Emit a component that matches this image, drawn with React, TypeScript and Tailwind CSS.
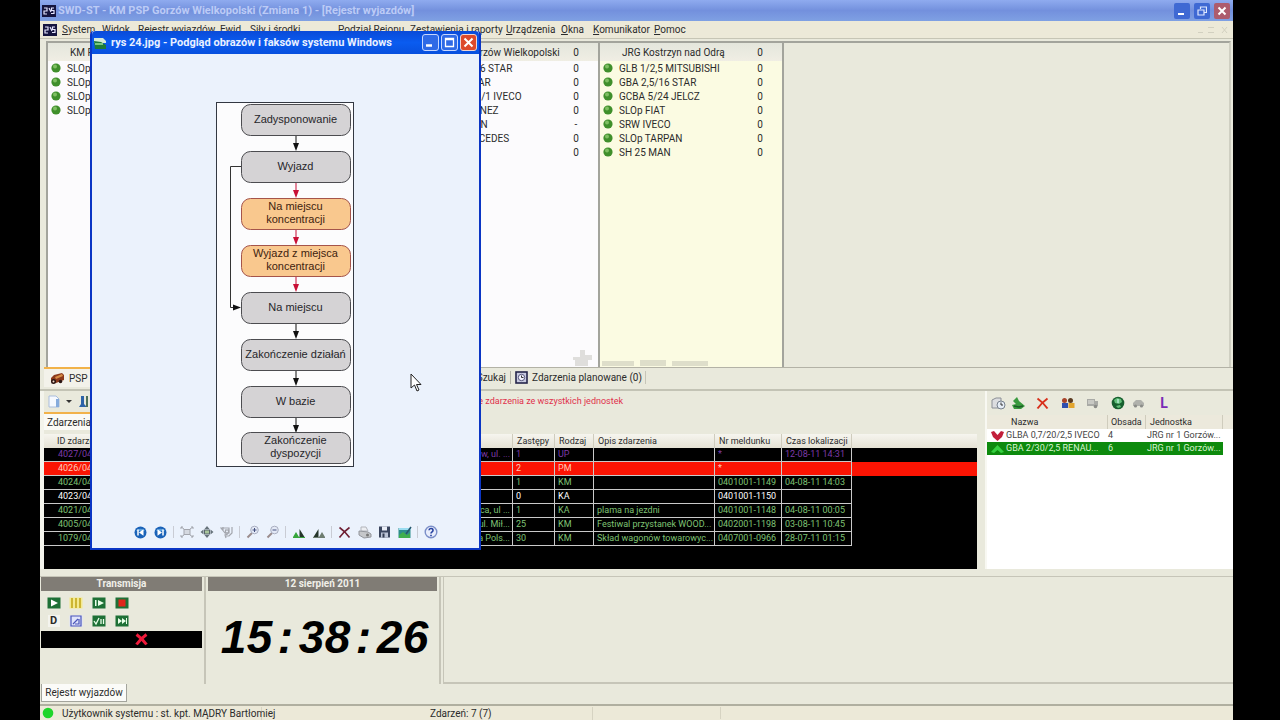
import type { ReactNode } from "react";

type IconButtonProps = { label: string; size?: string; children: ReactNode };

function IconButton({ label, size = "h-5 w-5", children }: IconButtonProps) {
  return (
    <button type="button" aria-label={label} className={"flex shrink-0 items-center justify-center " + size}>
      {children}
    </button>
  );
}

function AppBadge() {
  return (
    <svg width="14" height="12" viewBox="0 0 14 12" className="shrink-0">
      <rect width="14" height="12" fill="#15153f" />
      <path d="M2 3h3v3H2v3h3M7 3l2 4M12 3H9.500v2.500h2.500v3H9" fill="none" stroke="#e6e6ff" strokeWidth="1.200" />
    </svg>
  );
}

function StatusDot() {
  return (
    <svg width="10" height="10" viewBox="0 0 10 10" className="shrink-0">
      <circle cx="5" cy="5" r="4.600" fill="#3f8f2b" />
      <circle cx="4" cy="3.500" r="2" fill="#7fbf62" />
    </svg>
  );
}

type Unit = { name: string; count: string };

function UnitColumn({ title, total, units, tint }: { title: string; total: string; units: Unit[]; tint: string }) {
  return (
    <section className={"flex w-[184px] shrink-0 flex-col border-r-2 border-[#a3a49c] " + tint}>
      <header className="flex h-[18px] items-center bg-linear-to-b from-[#e4e6dc] to-[#f0eee4] pl-[22px] pr-4">
        <h2 className="flex-1 whitespace-nowrap">{title}</h2>
        <span className="w-3 text-center">{total}</span>
      </header>
      <ul>
        {units.map((u) => (
          <li key={u.name} className="flex h-[14px] items-center pl-[3px] pr-4">
            <StatusDot />
            <span className="ml-[6px] flex-1 whitespace-nowrap">{u.name}</span>
            <span className="w-3 text-center">{u.count}</span>
          </li>
        ))}
      </ul>
    </section>
  );
}

const kmUnits: Unit[] = [
  { name: "SLOp POLONEZ", count: "0" },
  { name: "SLOp FIAT", count: "0" },
  { name: "SLOp FORD", count: "0" },
  { name: "SLOp OPEL", count: "0" },
];
const gorzowUnits: Unit[] = [
  { name: "GBA 2,5/16 STAR", count: "0" },
  { name: "GLM 8 STAR", count: "0" },
  { name: "GBAM 2/8/1 IVECO", count: "0" },
  { name: "SD MARTINEZ", count: "0" },
  { name: "SHD 2 MAN", count: "-" },
  { name: "SLRt MERCEDES", count: "0" },
  { name: "PA", count: "0" },
];
const kostrzynUnits: Unit[] = [
  { name: "GLB 1/2,5 MITSUBISHI", count: "0" },
  { name: "GBA 2,5/16 STAR", count: "0" },
  { name: "GCBA 5/24 JELCZ", count: "0" },
  { name: "SLOp FIAT", count: "0" },
  { name: "SRW IVECO", count: "0" },
  { name: "SLOp TARPAN", count: "0" },
  { name: "SH 25 MAN", count: "0" },
];

type EventRow = { id: string; place: string; teams: string; kind: string; desc: string; report: string; time: string; tone: string };
const green = "text-[#7fc274]";
const events: EventRow[] = [
  { id: "4027/04", place: "Gorzów, ul. ...", teams: "1", kind: "UP", desc: "", report: "*", time: "12-08-11 14:31", tone: "text-[#7d3aa8]" },
  { id: "4026/04", place: "", teams: "2", kind: "PM", desc: "", report: "*", time: "", tone: "bg-[#fb1403] text-[#ffc9b8]" },
  { id: "4024/04", place: "", teams: "1", kind: "KM", desc: "", report: "0401001-1149", time: "04-08-11 14:03", tone: green },
  { id: "4023/04", place: "", teams: "0", kind: "KA", desc: "", report: "0401001-1150", time: "", tone: "text-white" },
  { id: "4021/04", place: "Witnica, ul  ...", teams: "1", kind: "KA", desc: "plama na jezdni", report: "0401001-1148", time: "04-08-11 00:05", tone: green },
  { id: "4005/04", place: "ul. Mił...", teams: "25", kind: "KM", desc: "Festiwal przystanek WOOD...", report: "0402001-1198", time: "03-08-11 10:45", tone: green },
  { id: "1079/04", place: "Armia Pols...", teams: "30", kind: "KM", desc: "Skład wagonów towarowyc...", report: "0407001-0966", time: "28-07-11 01:15", tone: green },
];

function EventsTable() {
  const cell = "h-[14px] whitespace-nowrap border-b border-r border-[#c9c9c9] p-0 pl-[3px]";
  const head = "h-[14px] whitespace-nowrap border-r border-[#cfccbd] p-0 pl-1 text-left font-normal";
  return (
    <table className="w-full table-fixed border-separate border-spacing-0 text-[9px]">
      <colgroup>
        <col className="w-[75px]" />
        <col className="w-[394px]" />
        <col className="w-[42px]" />
        <col className="w-[39px]" />
        <col className="w-[121px]" />
        <col className="w-[67px]" />
        <col className="w-[70px]" />
        <col />
      </colgroup>
      <thead>
        <tr className="bg-linear-to-b from-[#f6f5ef] to-[#e5e2d4]">
          <th className={head + " pl-[13px]"}>ID zdarzenia</th>
          <th className={head}>Miejsce</th>
          <th className={head}>Zastępy</th>
          <th className={head}>Rodzaj</th>
          <th className={head}>Opis zdarzenia</th>
          <th className={head}>Nr meldunku</th>
          <th className={head}>Czas lokalizacji</th>
          <th className="p-0" />
        </tr>
      </thead>
      <tbody>
        {events.map((e) => (
          <tr key={e.id} className={e.tone}>
            <td className={cell + " pl-[14px]"}>{e.id}</td>
            <td className={cell + " pr-[2px] text-right"}>{e.place}</td>
            <td className={cell}>{e.teams}</td>
            <td className={cell}>{e.kind}</td>
            <td className={cell}>{e.desc}</td>
            <td className={cell}>{e.report}</td>
            <td className={cell}>{e.time}</td>
            <td className="p-0" />
          </tr>
        ))}
      </tbody>
    </table>
  );
}

function TruckIcon() {
  return (
    <svg width="15" height="13" viewBox="0 0 15 13">
      <path d="M1 6l3-3 8-2 2 2v5l-8 3-5-1z" fill="#8c3a1c" />
      <path d="M5 5l7-3 1 2-7 3z" fill="#d98d45" />
      <circle cx="3.500" cy="9.500" r="2.500" fill="#2b1512" />
      <circle cx="3.500" cy="9.500" r="1" fill="#f2d9c8" />
      <circle cx="10.500" cy="9.500" r="1.800" fill="#2b1512" />
    </svg>
  );
}

function ClockIcon() {
  return (
    <svg width="13" height="13" viewBox="0 0 13 13">
      <rect x="1" y="1" width="11" height="11" fill="#c9cbe0" stroke="#25254a" strokeWidth="1.600" />
      <circle cx="6.500" cy="6.500" r="3.200" fill="#f4f4ff" stroke="#55557a" />
      <path d="M6.500 4.500v2h2" fill="none" stroke="#333" />
    </svg>
  );
}

function CrossIcon({ color = "#d8301c", width = 2 }: { color?: string; width?: number }) {
  return (
    <svg width="13" height="13" viewBox="0 0 13 13">
      <path d="M1.500 1.500C5 4 9 8 11.500 11.500M11.500 1.500C8 4 4 8 1.500 11.500" stroke={color} strokeWidth={width} fill="none" />
    </svg>
  );
}

const nodes = [
  { y: 2, lines: ["Zadysponowanie"], hot: false, hotArrow: false },
  { y: 49, lines: ["Wyjazd"], hot: false, hotArrow: true },
  { y: 96, lines: ["Na miejscu", "koncentracji"], hot: true, hotArrow: true },
  { y: 143, lines: ["Wyjazd z miejsca", "koncentracji"], hot: true, hotArrow: true },
  { y: 190, lines: ["Na miejscu"], hot: false, hotArrow: false },
  { y: 237, lines: ["Zakończenie działań"], hot: false, hotArrow: false },
  { y: 284, lines: ["W bazie"], hot: false, hotArrow: false },
  { y: 330, lines: ["Zakończenie", "dyspozycji"], hot: false, hotArrow: false },
];

function FlowDiagram() {
  return (
    <svg width="138" height="365" viewBox="0 0 138 365" fontFamily="'Liberation Sans', Arial, sans-serif" fontSize="11">
      <rect x="0.500" y="0.500" width="137" height="364" fill="#fcfcfd" stroke="#333842" />
      {nodes.map((n, i) => {
        const arrow = n.hotArrow ? "#c80f36" : "#111";
        return (
          <g key={n.y}>
            <rect x="25.500" y={n.y + 0.5} width="109" height="31" rx="9" fill={n.hot ? "#f9c88e" : "#d5d3d5"} stroke={n.hot ? "#a5544a" : "#4c4c50"} />
            {i < nodes.length - 1 && (
              <g>
                <path d={`M80 ${n.y + 32}v8`} stroke={arrow} />
                <path d={`M77 ${n.y + 39}h6l-3 8z`} fill={arrow} />
              </g>
            )}
            {n.lines.map((t, k) => (
              <text key={t} x="79.500" y={n.lines.length === 1 ? n.y + 19 : n.y + 12 + k * 13} textAnchor="middle" fill={n.hot ? "#40230f" : "#26262a"}>
                {t}
              </text>
            ))}
          </g>
        );
      })}
      <path d="M25 64.500H14.500V205.500H18" fill="none" stroke="#333" />
      <path d="M17 202.500v6l8-3z" fill="#111" />
    </svg>
  );
}

function Magnifier({ plus }: { plus: boolean }) {
  return (
    <svg width="14" height="14" viewBox="0 0 14 14">
      <path d="M1.500 12.500L6 8" stroke="#9b8c8c" strokeWidth="2" />
      <circle cx="8.500" cy="5" r="3.800" fill="#e3e9f6" stroke="#a9aec0" />
      <path d={plus ? "M6.500 5h4M8.500 3v4" : "M6.500 5h4"} stroke="#44507e" />
    </svg>
  );
}

function NavDisc({ flip }: { flip: boolean }) {
  return (
    <svg width="13" height="13" viewBox="0 0 13 13" className={flip ? "-scale-x-100" : ""}>
      <circle cx="6.500" cy="6.500" r="6" fill="#1b63b8" />
      <path d="M2 5a5 4 0 019 0z" fill="#5aa1df" />
      <path d="M4 3.500v6" stroke="#fff" strokeWidth="1.500" />
      <path d="M9.500 3.300v6.400L5 6.500z" fill="#fff" />
    </svg>
  );
}

function Hills({ flip, color }: { flip: boolean; color: string }) {
  return (
    <svg width="14" height="12" viewBox="0 0 14 12" className={flip ? "-scale-x-100" : ""}>
      <path d="M1 11l3-5 3 5z" fill={color} />
      <path d="M7.500 3v8h5z" fill="#24352a" />
      <path d="M1 11.500h12" stroke={color} />
    </svg>
  );
}

function Divider() {
  return (
    <span className="flex w-[6px] justify-center">
      <span className="h-3 w-px bg-[#c9ccd4]" />
    </span>
  );
}

function ViewerToolbar() {
  return (
    <div className="flex h-5 items-center">
      <IconButton label="Poprzedni obraz"><NavDisc flip={false} /></IconButton>
      <IconButton label="Następny obraz"><NavDisc flip /></IconButton>
      <Divider />
      <IconButton label="Najlepsze dopasowanie">
        <svg width="14" height="12" viewBox="0 0 14 12" fill="none" stroke="#a3a6ad">
          <rect x="4" y="3.500" width="6" height="5" fill="#d5d9e0" />
          <path d="M1 1l3 2M13 1l-3 2M1 11l3-2M13 11l-3-2M1 3V1h2M11 1h2v2M1 9v2h2M11 11h2V9" />
        </svg>
      </IconButton>
      <IconButton label="Rzeczywisty rozmiar">
        <svg width="14" height="14" viewBox="0 0 14 14" fill="#66727a">
          <rect x="4.500" y="5" width="5" height="4" fill="#a8c59b" stroke="#59646c" />
          <path d="M7 1l2.500 3h-5zM7 13l2.500-3h-5zM.5 7l3-2.500v5zM13.500 7l-3-2.500v5z" />
        </svg>
      </IconButton>
      <IconButton label="Pokaz slajdów">
        <svg width="14" height="13" viewBox="0 0 14 13" fill="none" stroke="#a3a6ad" strokeWidth="1.200">
          <path d="M1 2h8v5H5zM3 1v3M12 1v6l-3 3H6M6 12l-1-3 3-1" />
          <rect x="5.500" y="4" width="3" height="3" />
        </svg>
      </IconButton>
      <Divider />
      <IconButton label="Powiększ"><Magnifier plus /></IconButton>
      <IconButton label="Pomniejsz"><Magnifier plus={false} /></IconButton>
      <Divider />
      <IconButton label="Obróć w prawo"><Hills flip={false} color="#35a53b" /></IconButton>
      <IconButton label="Obróć w lewo"><Hills flip color="#6d7d70" /></IconButton>
      <Divider />
      <IconButton label="Usuń"><CrossIcon color="#6e1f33" width={1.6} /></IconButton>
      <IconButton label="Drukuj">
        <svg width="14" height="13" viewBox="0 0 14 13">
          <path d="M3 1h5l2 4H3z" fill="#eceef2" stroke="#b2b5bb" />
          <path d="M1 5l9 1 3 2v3l-7 1-5-3z" fill="#c5c7ca" stroke="#93969c" />
          <circle cx="9.500" cy="9" r="1.500" fill="#777" />
        </svg>
      </IconButton>
      <IconButton label="Kopiuj do">
        <svg width="13" height="12" viewBox="0 0 13 12">
          <path d="M1 .5h11v11H1z" fill="#3a455e" />
          <path d="M4 .5h5v4H4z" fill="#e9edf6" />
          <path d="M3 6.500h7v5H3z" fill="#bcc4d6" />
          <path d="M4.500 7.500h2v4h-2z" fill="#333c52" />
        </svg>
      </IconButton>
      <IconButton label="Edytuj">
        <svg width="14" height="13" viewBox="0 0 14 13">
          <rect x=".5" y="2" width="12" height="10" fill="#2d8d8c" />
          <path d="M1 9l4-3 4 3 3-2v5H1z" fill="#3fae4d" />
          <path d="M1 3h12" stroke="#9adcf0" strokeWidth="2" />
          <path d="M13 1L8 8" stroke="#27566b" strokeWidth="1.500" />
        </svg>
      </IconButton>
      <Divider />
      <IconButton label="Pomoc">
        <svg width="14" height="14" viewBox="0 0 14 14">
          <circle cx="7" cy="7" r="5.800" fill="#e8edfb" stroke="#7b8fc8" strokeWidth="1.400" />
          <path d="M5 5.300a2 2 0 114 .3c0 1.200-2 1.300-2 2.900M7 9.800v1.400" fill="none" stroke="#2743a0" strokeWidth="1.600" />
        </svg>
      </IconButton>
    </div>
  );
}

function ImageViewer() {
  return (
    <div role="dialog" aria-label="Podgląd obrazów" className="absolute left-[50px] top-[31px] flex h-[519px] w-[391px] flex-col rounded-t-[4px] border-2 border-t-0 border-[#0a35c4] bg-[#ebf2fc]">
      <div className="flex h-[23px] items-center rounded-t-[4px] bg-linear-to-b from-[#0a4ad8] via-[#0a5cf0] to-[#0850de] pl-[2px] pr-[2px]">
        <svg width="13" height="13" viewBox="0 0 13 13">
          <path d="M0 2h9l3 3v2H0z" fill="#d5ead9" />
          <path d="M0 5l7 1 5 3v4H1z" fill="#1d7c39" />
          <path d="M1 8h8" stroke="#9be09c" strokeWidth="1.500" />
        </svg>
        <h1 className="ml-1 flex-1 whitespace-nowrap text-[11px] font-bold text-[#e9f0ff]">
          rys 24.jpg - Podgląd obrazów i faksów systemu Windows
        </h1>
        <div className="flex gap-[2px]">
          <IconButton label="Minimalizuj" size="h-[17px] w-[17px] rounded-[3px] border border-[#c7d7ff] bg-[#2f6ae6]">
            <svg width="11" height="11" viewBox="0 0 11 11"><path d="M1 8.500h6" stroke="#fff" strokeWidth="2.500" /></svg>
          </IconButton>
          <IconButton label="Maksymalizuj" size="h-[17px] w-[17px] rounded-[3px] border border-[#c7d7ff] bg-[#2f6ae6]">
            <svg width="11" height="11" viewBox="0 0 11 11"><path d="M1.500 1.500h8v8h-8zM1 2.500h9" fill="none" stroke="#fff" strokeWidth="1.300" /></svg>
          </IconButton>
          <IconButton label="Zamknij podgląd" size="h-[17px] w-[17px] rounded-[3px] border border-[#f1d5d0] bg-[#dd4a2c]">
            <svg width="11" height="11" viewBox="0 0 11 11"><path d="M1.500 1.500l8 8M9.500 1.500l-8 8" stroke="#fff" strokeWidth="2" /></svg>
          </IconButton>
        </div>
      </div>
      <div className="flex flex-1 justify-center pr-[2px] pt-12">
        <FlowDiagram />
      </div>
      <div className="flex justify-center pb-[6px]">
        <ViewerToolbar />
      </div>
      <svg width="12" height="19" viewBox="0 0 12 19" className="absolute left-[318px] top-[342px]">
        <path d="M1 1v14l3.500-3 2.500 6 2-1-2.500-5.500H11z" fill="#fff" stroke="#222" />
      </svg>
    </div>
  );
}

function CrewPanel() {
  const head = "h-[14px] border-r border-[#cfccbd] p-0 text-left font-normal";
  const cell = "h-[13px] whitespace-nowrap p-0";
  return (
    <aside className="flex w-[248px] shrink-0 flex-col border-l-2 border-[#f8f8f2]">
      <div className="flex h-6 items-center pl-px">
        <IconButton label="Dokument">
          <svg width="15" height="13" viewBox="0 0 15 13">
            <path d="M1 3l4-2h5v10H1z" fill="#dcdde0" stroke="#8b8f96" />
            <circle cx="10" cy="8" r="4" fill="#e6edf6" stroke="#77808d" />
            <path d="M10 5.500V8h2" stroke="#333" fill="none" />
          </svg>
        </IconButton>
        <IconButton label="Wyślij">
          <svg width="15" height="14" viewBox="0 0 15 14">
            <path d="M2 5l4-4 2 4 6 5-4 3H3L1 9l4-1z" fill="#3a9a3e" />
            <path d="M3 10l5 1 4-1" stroke="#1c5b26" fill="none" strokeWidth="1.500" />
          </svg>
        </IconButton>
        <span className="w-1" />
        <IconButton label="Usuń zastęp"><CrossIcon /></IconButton>
        <span className="w-[6px]" />
        <IconButton label="Obsada">
          <svg width="14" height="12" viewBox="0 0 14 12">
            <circle cx="3.500" cy="3.500" r="2.500" fill="#a8432a" />
            <rect x="1" y="6" width="6" height="5" fill="#2f4faf" />
            <circle cx="9.500" cy="3.500" r="2.500" fill="#5b3a20" />
            <rect x="7.500" y="6" width="6" height="5" fill="#e2a52e" />
          </svg>
        </IconButton>
        <span className="w-1" />
        <IconButton label="Pojazd">
          <svg width="13" height="11" viewBox="0 0 13 11">
            <path d="M1 1h8v2h3v5H1z" fill="#a9aaa6" />
            <path d="M2 3h6M2 5h6" stroke="#e8e8e2" />
            <circle cx="9.500" cy="8.500" r="1.800" fill="#8b8c88" />
          </svg>
        </IconButton>
        <span className="w-[6px]" />
        <IconButton label="Mapa">
          <svg width="14" height="14" viewBox="0 0 14 14">
            <circle cx="7" cy="7" r="6.300" fill="#17602f" />
            <path d="M3 4l3-2 4 1 1 3-3 2-4-1zM5 10l4-1 1 2-3 1z" fill="#63c07a" />
            <path d="M7 3v4" stroke="#dff" />
          </svg>
        </IconButton>
        <IconButton label="Samochód">
          <svg width="13" height="10" viewBox="0 0 13 10">
            <path d="M1 5l3-3h5l3 3v3H1z" fill="#b0b1ac" />
            <circle cx="3.500" cy="8" r="1.600" fill="#8b8c88" />
            <circle cx="9.500" cy="8" r="1.600" fill="#8b8c88" />
          </svg>
        </IconButton>
        <span className="w-[6px]" />
        <IconButton label="Lista"><span className="text-[14px] font-bold text-[#7a2bb5]">L</span></IconButton>
      </div>
      <div className="flex-1 bg-white">
        <table className="w-full table-fixed border-separate border-spacing-0 text-[9px]">
          <colgroup>
            <col className="w-[121px]" />
            <col className="w-[38px]" />
            <col />
            <col className="w-[10px]" />
          </colgroup>
          <thead>
            <tr className="bg-[#ece9dc]">
              <th className={head + " pl-6"}>Nazwa</th>
              <th className={head + " pl-[3px]"}>Obsada</th>
              <th className={head + " pl-1"}>Jednostka</th>
              <th className="p-0" />
            </tr>
          </thead>
          <tbody>
            <tr className="text-[#444]">
              <td className={cell}>
                <span className="flex items-center pl-1">
                  <svg width="13" height="10" viewBox="0 0 13 10" className="mr-[2px] shrink-0"><path d="M0 1l3-1 3.500 4L10 0l3 1-2 5-4.500 4L2 6z" fill="#c21f3a" /></svg>
                  GLBA 0,7/20/2,5 IVECO
                </span>
              </td>
              <td className={cell}>4</td>
              <td className={cell + " pl-px"}>JRG nr 1 Gorzów...</td>
              <td className="p-0" />
            </tr>
            <tr className="text-[#d9f5d2]">
              <td className={cell + " bg-[#0d8a0d]"}>
                <span className="flex items-center pl-1">
                  <svg width="13" height="8" viewBox="0 0 13 8" className="mr-[2px] shrink-0"><path d="M0 7l6.500-7L13 7l-3 1-3.500-3L3 8z" fill="#35d040" /></svg>
                  GBA 2/30/2,5 RENAU...
                </span>
              </td>
              <td className={cell + " bg-[#0d8a0d]"}>6</td>
              <td className={cell + " bg-[#0d8a0d] pl-px"}>JRG nr 1 Gorzów...</td>
              <td className="p-0" />
            </tr>
          </tbody>
        </table>
      </div>
    </aside>
  );
}

function TransmissionButtons() {
  const box = (bg: string, mark: ReactNode) => (
    <svg width="14" height="12" viewBox="0 0 14 12">
      <rect x=".5" y=".5" width="13" height="11" fill={bg} />
      {mark}
    </svg>
  );
  return (
    <div className="grid w-[92px] grid-cols-4 pl-px pt-[3px]">
      <IconButton label="Start" size="h-[18px] w-[23px]">{box("#1e7036", <path d="M4 2.500L11 6 4 9.500z" fill="#fff" />)}</IconButton>
      <IconButton label="Wstrzymaj" size="h-[18px] w-[23px]">{box("#f3e98f", <path d="M3 1v10M7 1v10M11 1v10" stroke="#c3a81c" strokeWidth="1.600" />)}</IconButton>
      <IconButton label="Krok" size="h-[18px] w-[23px]">{box("#1e7036", <path d="M3 3h1.500v6H3zM6 3l6 3-6 3z" fill="#eaffea" />)}</IconButton>
      <IconButton label="Stop" size="h-[18px] w-[23px]">{box("#1e7036", <rect x="3.500" y="2.500" width="7" height="7" fill="#e0261c" />)}</IconButton>
      <IconButton label="Dane" size="h-[18px] w-[23px]">
        <span className="w-3 bg-[#f4f4ee] text-center text-[11px] font-bold leading-3">D</span>
      </IconButton>
      <IconButton label="Raport" size="h-[18px] w-[23px]">{box("#dfe3fb", <path d="M2 1h10v10H2zM4 9l5-5M6 9h4V4" fill="none" stroke="#4a55b8" strokeWidth="1.200" />)}</IconButton>
      <IconButton label="Wykonaj" size="h-[18px] w-[23px]">{box("#1e7036", <path d="M2 6l2 3 3-6M9 4v5M11.500 4v5" fill="none" stroke="#eaffea" strokeWidth="1.300" />)}</IconButton>
      <IconButton label="Dalej" size="h-[18px] w-[23px]">{box("#1e7036", <path d="M3 3l4 3-4 3zM7 3l4 3-4 3zM11 3h1v6h-1z" fill="#eaffea" />)}</IconButton>
    </div>
  );
}

const menus = [
  { label: "System", width: "w-10" },
  { label: "Widok", width: "w-9" },
  { label: "Rejestr wyjazdów", width: "w-[82px]" },
  { label: "Ewid.", width: "w-[30px]" },
  { label: "Siły i środki", width: "w-[88px]" },
  { label: "Podział Rejonu", width: "w-[72px]" },
  { label: "Zestawienia i raporty", width: "w-24" },
  { label: "Urządzenia", width: "w-[55px]" },
  { label: "Okna", width: "w-8" },
  { label: "Komunikator", width: "w-[61px]" },
  { label: "Pomoc", width: "w-10" },
];

export default function App() {
  return (
    <div className="flex min-h-screen bg-black pl-10 pr-[47px] font-[Roboto,'Liberation_Sans',sans-serif] text-[10px] leading-[13px] text-[#2b2b2b]">
      <div className="relative flex min-w-0 flex-1 flex-col bg-[#e9e9dc]">
        <header className="flex h-[21px] items-center bg-linear-to-b from-[#8fabef] via-[#7390dd] to-[#7fa0e3] pl-[2px] pr-[3px]">
          <AppBadge />
          <h1 className="ml-[2px] flex-1 whitespace-nowrap text-[11px] font-bold text-[#bccbf6]">
            SWD-ST - KM PSP Gorzów Wielkopolski (Zmiana 1) - [Rejestr wyjazdów]
          </h1>
          <div className="flex gap-1">
            <IconButton label="Minimalizuj okno" size="h-4 w-4 rounded-[2px] bg-[#3f69d3]">
              <svg width="10" height="10" viewBox="0 0 10 10"><path d="M1 8h6" stroke="#fff" strokeWidth="2" /></svg>
            </IconButton>
            <IconButton label="Przywróć okno" size="h-4 w-4 rounded-[2px] bg-[#3f69d3]">
              <svg width="10" height="10" viewBox="0 0 10 10"><path d="M3.500 3V1h6v5.500H7M1 4h6v5H1z" fill="none" stroke="#dfe8ff" strokeWidth="1.200" /></svg>
            </IconButton>
            <IconButton label="Zamknij okno" size="h-4 w-4 rounded-[2px] bg-[#ad5c6d]">
              <svg width="10" height="10" viewBox="0 0 10 10"><path d="M1.500 1.500l7 7M8.500 1.500l-7 7" stroke="#fff" strokeWidth="2" /></svg>
            </IconButton>
          </div>
        </header>

        <nav className="flex h-[18px] items-center border-b border-[#c6c5b5] bg-[#ece9d8] pl-[3px]">
          <AppBadge />
          <span className="w-[5px]" />
          {menus.map((m) => (
            <a key={m.label} href="#menu" className={"shrink-0 whitespace-nowrap " + m.width}>
              <span className="underline">{m.label[0]}</span>
              {m.label.slice(1)}
            </a>
          ))}
          <span className="flex-1" />
          <svg width="32" height="8" viewBox="0 0 32 8" className="mr-1" fill="none" stroke="#d2d0c0">
            <path d="M1 6.500h5M11 1.500h6M11 6.500h6M25 1l5 6M30 1l-5 6" />
          </svg>
        </nav>

        <main className="flex flex-1 flex-col">
          <div className="relative ml-[6px] mr-[2px] mt-[2px] flex min-h-[323px] flex-1 border-2 border-b-0 border-[#a3a49c] border-r-[#cfcfc2]">
            <UnitColumn title="KM PSP Gorzów" total="0" units={kmUnits} tint="bg-[#fcfbfd]" />
            <UnitColumn title="JRG nr 2" total="0" units={[]} tint="bg-[#fcfbfd]" />
            <UnitColumn title="JRG 1 Gorzów Wielkopolski" total="0" units={gorzowUnits} tint="bg-[#fcfbfd]" />
            <UnitColumn title="JRG Kostrzyn nad Odrą" total="0" units={kostrzynUnits} tint="bg-[#fbfbe2]" />
            <svg width="140" height="18" viewBox="0 0 140 18" className="absolute bottom-0 left-[524px]" fill="#9a9a92" fillOpacity="0.300">
              <path d="M8 1h5v5h7v5h-4v6H3v-6H1V8h7z" />
              <path d="M30 12h32v5H30zM68 11h26v6H68zM100 12h36v5h-36z" />
            </svg>
          </div>

          <div className="ml-1 flex h-5 items-center border-t border-[#b3b2a6]">
            <button type="button" className="-mt-px flex h-5 w-[400px] items-center border-t-2 border-[#f2b24a] bg-[#f3f2ea] pl-[6px]">
              <TruckIcon />
              <span className="ml-1">PSP</span>
            </button>
            <button type="button" className="w-[67px] border-r border-[#b3b2a6] pr-1 text-right">Szukaj</button>
            <button type="button" className="flex items-center whitespace-nowrap border-r border-[#c6c5b8] pl-1 pr-[3px]">
              <ClockIcon />
              <span className="ml-1">Zdarzenia planowane (0)</span>
            </button>
          </div>

          <div className="mt-[2px] flex border-t-2 border-[#c3c3b5]">
            <section className="flex min-w-0 flex-1 flex-col border-l-4 border-[#f4f4ec] pr-2">
              <div className="flex h-[21px] items-center">
                <IconButton label="Nowe zdarzenie">
                  <svg width="13" height="13" viewBox="0 0 13 13"><path d="M1 1h7l3 3v8H1z" fill="#f6f9ff" stroke="#a9bddd" /><path d="M8 4h3v8H8z" fill="#86abdc" /></svg>
                </IconButton>
                <svg width="6" height="4" viewBox="0 0 6 4" className="mx-[2px]"><path d="M0 0h6L3 3z" fill="#333" /></svg>
                <IconButton label="Szukaj zdarzenia">
                  <svg width="12" height="13" viewBox="0 0 12 13"><path d="M3 1h3v8l3 3H1l2-3z" fill="#2d63a8" /><path d="M8 1h2v11H8z" fill="#4d6f57" /></svg>
                </IconButton>
                <p className="w-[529px] whitespace-nowrap text-right text-[9px] text-[#e0304b]">Wszystkie zdarzenia ze wszystkich jednostek</p>
              </div>
              <div className="flex h-[22px] items-start">
                <button type="button" className="h-[18px] w-[120px] border-t-2 border-[#f2b24a] bg-[#fafaf6] pl-[3px] text-left">Zdarzenia</button>
              </div>
              <div className="min-h-[135px] bg-black">
                <EventsTable />
              </div>
            </section>
            <CrewPanel />
          </div>

          <div className="mt-[7px] flex h-[108px] border-t border-[#c6c5b8]">
            <section className="w-[166px] shrink-0 border-r-2 border-[#c6c5b8] pl-px pr-[2px]">
              <h2 className="h-[14px] bg-[#807c75] text-center font-bold text-[#f0efe8]">Transmisja</h2>
              <TransmissionButtons />
              <div className="mt-px flex h-[17px] items-center justify-center bg-black pl-10"><CrossIcon color="#f01a3a" width={3} /></div>
            </section>
            <section className="w-[235px] shrink-0 border-r-2 border-[#c6c5b8] pl-[2px] pr-[2px]">
              <h2 className="h-[14px] bg-[#807c75] text-center font-bold text-[#f0efe8]">12 sierpień 2011</h2>
              <time className="flex justify-center pl-1 pt-4 font-['Liberation_Sans',sans-serif] text-[46px] font-bold italic leading-[60px] text-black">
                {"15:38:26".split("").map((c, i) => (
                  <span key={i} className="flex w-[26px] justify-center">{c}</span>
                ))}
              </time>
            </section>
            <div className="ml-[2px] flex-1 border-b-2 border-l border-[#c6c5b8]" />
          </div>

          <div className="flex h-5 items-start pl-px">
            <button type="button" className="h-[18px] w-[86px] whitespace-nowrap border border-t-0 border-[#a3a49c] bg-[#fbfbf8] text-center">Rejestr wyjazdów</button>
          </div>
        </main>

        <footer className="flex h-4 items-center border-t-2 border-[#b0afa0] bg-[#ece9d8] pl-[2px]">
          <svg width="12" height="12" viewBox="0 0 12 12"><circle cx="6" cy="6" r="5.300" fill="#1fd52a" /></svg>
          <span className="ml-2 w-[200px] whitespace-nowrap border-r border-[#d6d3c2]">Użytkownik systemu : st. kpt. MĄDRY Bartłomiej</span>
          <span className="w-[331px] border-r border-[#d6d3c2] pl-[168px]">Zdarzeń: 7 (7)</span>
          <span className="h-3 w-32 border-r border-[#d6d3c2]" />
        </footer>

        <ImageViewer />
      </div>
    </div>
  );
}
